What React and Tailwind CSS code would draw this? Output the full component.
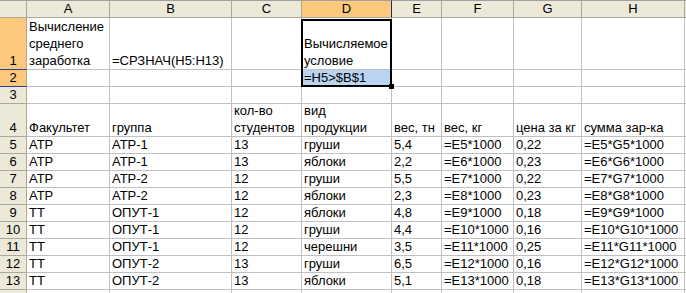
import React from "react";

const COLS = ["A", "B", "C", "D", "E", "F", "G", "H"];

const ROWS = [
  ["АТР", "АТР-1", "13", "груши", "5,4", "=E5*1000", "0,22", "=E5*G5*1000"],
  ["АТР", "АТР-1", "13", "яблоки", "2,2", "=E6*1000", "0,23", "=E6*G6*1000"],
  ["АТР", "АТР-2", "12", "груши", "5,5", "=E7*1000", "0,22", "=E7*G7*1000"],
  ["АТР", "АТР-2", "12", "яблоки", "2,3", "=E8*1000", "0,23", "=E8*G8*1000"],
  ["ТТ", "ОПУТ-1", "12", "яблоки", "4,8", "=E9*1000", "0,18", "=E9*G9*1000"],
  ["ТТ", "ОПУТ-1", "12", "груши", "4,4", "=E10*1000", "0,16", "=E10*G10*1000"],
  ["ТТ", "ОПУТ-1", "12", "черешни", "3,5", "=E11*1000", "0,25", "=E11*G11*1000"],
  ["ТТ", "ОПУТ-2", "13", "груши", "6,5", "=E12*1000", "0,16", "=E12*G12*1000"],
  ["ТТ", "ОПУТ-2", "13", "яблоки", "5,1", "=E13*1000", "0,18", "=E13*G13*1000"],
];

function ColHead({ label, active }) {
  return (
    <div
      className={
        "border-t border-b border-r border-t-[#a0a0a0] border-b-[#aca899] flex items-center justify-center leading-[16px] " +
        (active
          ? "bg-[#fbc87c] border-r-[#1f2a7a]"
          : "bg-[#ece9d8] border-r-[#aca899]")
      }
    >
      {label}
    </div>
  );
}

function RowHead({ n, active, lines = 1 }) {
  return (
    <div
      className={
        "border-r border-b border-r-[#aca899] flex items-end justify-center " +
        (active
          ? "bg-[#fbc87c] border-b-[#2f3f8f]"
          : "bg-[#ece9d8] border-b-[#aca899]") +
        (lines > 1 ? " leading-[17px]" : " leading-[16px]")
      }
    >
      {n}
    </div>
  );
}

function Cell({ children, multi, className = "" }) {
  return (
    <div
      className={
        "border-r border-b border-[#c0c0c0] flex items-end pl-[2px] whitespace-pre min-w-0 " +
        (multi ? "leading-[17px] " : "leading-[16px] ") +
        className
      }
    >
      {children}
    </div>
  );
}

export default function App() {
  return (
    <div
      className="w-[686px] h-[293px] overflow-hidden bg-white text-[13px] text-black"
      style={{ fontFamily: '"Liberation Sans", Arial, sans-serif' }}
    >
      <div className="grid grid-cols-[27px_83px_122px_70px_90px_50px_72px_68px_103px_1fr] grid-rows-[18px_52px_17px_17px_33px_repeat(10,17px)]">
        {/* column header strip */}
        <ColHead label="" />
        {COLS.map((c) => (
          <ColHead key={c} label={c} active={c === "D"} />
        ))}
        <ColHead label="" />

        {/* row 1 */}
        <RowHead n={1} active lines={3} />
        <Cell multi>{"Вычисление\nсреднего\nзаработка"}</Cell>
        <Cell>=СРЗНАЧ(H5:H13)</Cell>
        <Cell />
        <Cell multi className="relative">
          {"Вычисляемое\nусловие"}
          {/* selection frame around D1:D2 with fill handle */}
          <div className="absolute left-[-1px] top-[1px] w-[91px] h-[68px] border-2 border-black pointer-events-none z-10">
            <div className="absolute right-[-4px] bottom-[-4px] w-[5px] h-[5px] bg-black" />
          </div>
        </Cell>
        <Cell />
        <Cell />
        <Cell />
        <Cell />
        <Cell />

        {/* row 2 */}
        <RowHead n={2} active />
        <Cell />
        <Cell />
        <Cell />
        <Cell className="bg-[#b9d3f1]">=H5&gt;$B$1</Cell>
        <Cell />
        <Cell />
        <Cell />
        <Cell />
        <Cell />

        {/* row 3 */}
        <RowHead n={3} />
        {Array.from({ length: 9 }).map((_, i) => (
          <Cell key={i} />
        ))}

        {/* row 4: column titles */}
        <RowHead n={4} />
        <Cell>Факультет</Cell>
        <Cell>группа</Cell>
        <Cell multi>{"кол-во\nстудентов"}</Cell>
        <Cell multi>{"вид\nпродукции"}</Cell>
        <Cell>вес, тн</Cell>
        <Cell>вес, кг</Cell>
        <Cell>цена за кг</Cell>
        <Cell>сумма зар-ка</Cell>
        <Cell />

        {/* data rows 5..13 */}
        {ROWS.map((r, i) => (
          <React.Fragment key={i}>
            <RowHead n={i + 5} />
            {r.map((v, j) => (
              <Cell key={j}>{v}</Cell>
            ))}
            <Cell />
          </React.Fragment>
        ))}

        {/* next row, only its top edge fits in the window */}
        <RowHead n="" />
        {Array.from({ length: 9 }).map((_, i) => (
          <Cell key={i} />
        ))}
      </div>
    </div>
  );
}
